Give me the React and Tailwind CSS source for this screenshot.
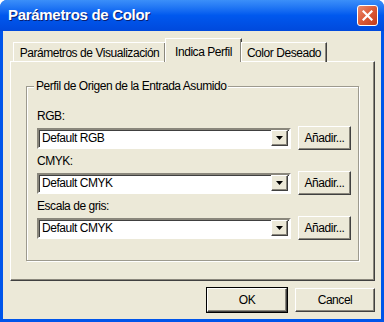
import React from "react";

const font = { fontFamily: '"Liberation Sans", Arial, sans-serif' };

// campo desplegable con boton de flecha
const Combo = ({ value }) => (
  <div className="w-[254px] h-[21px] bg-white border-2 border-t-[#8a877c] border-l-[#8a877c] border-b-white border-r-white shadow-[inset_1px_1px_0_#404040] flex items-center">
    <span className="flex-1 pl-[3px] text-[12px] tracking-[-0.45px] text-black leading-none">{value}</span>
    <div className="w-[17px] h-[16px] mr-[1px] bg-[#ECE9D8] border border-t-white border-l-white border-b-[#404040] border-r-[#404040] shadow-[inset_-1px_-1px_0_#8a877c] flex items-center justify-center">
      <svg width="7" height="4" viewBox="0 0 7 4">
        <path d="M0 0h7L3.5 4z" fill="#000" />
      </svg>
    </div>
  </div>
);

const Btn = ({ children, w = "w-[53px]", isDefault = false }) => (
  <div
    className={`${w} h-[24px] ${
      isDefault ? "outline outline-1 outline-black" : ""
    } bg-[#ECE9D8] border border-t-white border-l-white border-b-[#404040] border-r-[#404040] shadow-[inset_-1px_-1px_0_#8a877c] flex items-center justify-center text-[12px] tracking-[-0.45px] text-black`}
  >
    {children}
  </div>
);

const Row = ({ label, value, first }) => (
  <div className={first ? "" : "mt-[4px]"}>
    <div className="h-[14px] pl-[10px] text-[12px] tracking-[-0.45px] leading-[14px] text-black">{label}</div>
    <div className="mt-[3px] flex items-center pl-[10px]">
      <Combo value={value} />
      <div className="ml-[7px]">
        <Btn>Añadir...</Btn>
      </div>
    </div>
  </div>
);

export default function App() {
  return (
    <div className="w-[384px] h-[322px] bg-white" style={font}>
      <div className="w-full h-full rounded-t-[7px] bg-[#0055EA] flex flex-col overflow-hidden">
        {/* barra de titulo */}
        <div className="h-[31px] shrink-0 bg-gradient-to-b from-[#3b8ff9] via-[#0058ee] to-[#0049dc] flex items-center justify-between pl-[8px] pr-[6px]">
          <span className="text-white font-bold text-[15px] tracking-[-0.3px] [text-shadow:1px_1px_0_#0a1e6e]">
            Parámetros de Color
          </span>
          <div className="w-[21px] h-[21px] rounded-[3px] border border-white bg-gradient-to-br from-[#e98a6e] via-[#dc5a36] to-[#c13a1a] flex items-center justify-center">
            <svg width="11" height="11" viewBox="0 0 11 11">
              <path d="M1.5 1.5l8 8M9.5 1.5l-8 8" stroke="#fff" strokeWidth="2.2" strokeLinecap="square" />
            </svg>
          </div>
        </div>

        {/* cuerpo */}
        <div className="flex-1 mx-[3px] mb-[3px] bg-[#ECE9D8] pt-[7px] pl-[7px] pr-[6px] flex flex-col">
          {/* pestañas */}
          <div className="flex items-end h-[24px] ml-[3px] relative z-10 text-[12px] tracking-[-0.45px] text-black whitespace-nowrap">
            <div className="w-[153px] h-[20px] border border-b-0 border-t-white border-l-white border-r-[#404040] shadow-[inset_-1px_0_0_#8a877c] flex items-center justify-center">
              Parámetros de Visualización
            </div>
            <div className="w-[77px] h-[24px] -mx-[1px] bg-[#ECE9D8] border border-b-0 border-t-white border-l-white border-r-[#404040] shadow-[inset_-1px_0_0_#8a877c] flex items-start justify-center pt-[4px]">
              Indica Perfil
            </div>
            <div className="w-[86px] h-[20px] border border-b-0 border-t-white border-l-white border-r-[#404040] shadow-[inset_-1px_0_0_#8a877c] flex items-center justify-center">
              Color Deseado
            </div>
          </div>

          {/* panel */}
          <div className="-mt-[1px] h-[220px] w-[365px] border border-t-white border-l-white border-b-[#404040] border-r-[#404040] shadow-[inset_-1px_-1px_0_#8a877c] pt-[17px] pl-[15px]">
            <fieldset className="w-[333px] h-[182px] border border-[#9d9a8e] shadow-[1px_1px_0_#fff,inset_1px_1px_0_#fff] px-0 pt-[16px] m-0">
              <legend className="ml-[7px] px-[2px] bg-[#ECE9D8] text-[12px] tracking-[-0.45px] leading-[14px] text-black">
                Perfil de Origen de la Entrada Asumido
              </legend>
              <Row label="RGB:" value="Default RGB" first />
              <Row label="CMYK:" value="Default CMYK" />
              <Row label="Escala de gris:" value="Default CMYK" />
            </fieldset>
          </div>

          {/* botones */}
          <div className="mt-[7px] flex justify-end gap-[8px]">
            <Btn w="w-[80px]" isDefault>
              OK
            </Btn>
            <Btn w="w-[80px]">Cancel</Btn>
          </div>
        </div>
      </div>
    </div>
  );
}
